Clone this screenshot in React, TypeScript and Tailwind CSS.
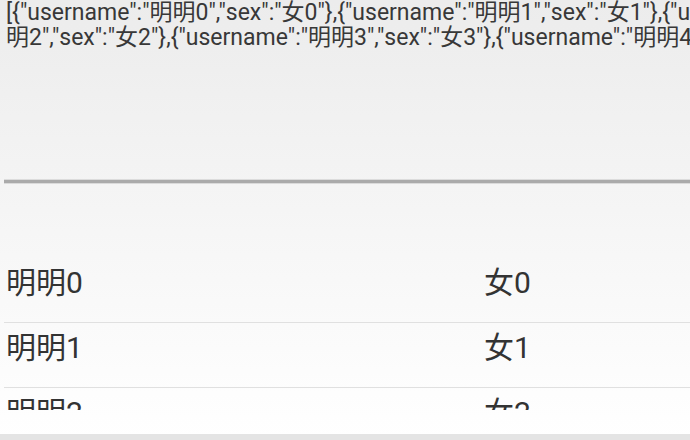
const rows = [
  { name: "明明0", sex: "女0" },
  { name: "明明1", sex: "女1" },
  { name: "明明2", sex: "女2" },
];

const font = { fontFamily: 'Roboto, "Noto Sans CJK SC", sans-serif' };

export default function App() {
  return (
    <div
      className="w-[690px] h-[440px] overflow-hidden flex flex-col bg-gradient-to-b from-[#ececec] to-[#ffffff]"
      style={font}
    >
      {/* raw json text */}
      <div className="pl-[6px] pt-0 text-[23px] leading-[25px] text-[#383838] whitespace-nowrap overflow-hidden">
        <div>{'[{"username":"明明0","sex":"女0"},{"username":"明明1","sex":"女1"},{"username":"明'}</div>
        <div>{'明2","sex":"女2"},{"username":"明明3","sex":"女3"},{"username":"明明4","sex":"女4"}]'}</div>
      </div>

      {/* divider */}
      <div className="mt-[129px] ml-[4px] flex flex-col">
        <div className="h-px bg-[#dcdcdc]" />
        <div className="h-[3px] bg-[#aaaaaa]" />
        <div className="h-px bg-[#dadada]" />
      </div>

      {/* list */}
      <div className="mt-[74px] h-[152px] overflow-hidden">
        {rows.map((r, i) => (
          <div key={r.name}>
            {i > 0 && <div className="ml-[4px] h-px bg-[#e0e0e0]" />}
            <div className="h-[64px] pt-[7px] flex text-[30px] leading-[36px] text-[#333333]">
              <div className="w-[484px] pl-[6px]">{r.name}</div>
              <div>{r.sex}</div>
            </div>
          </div>
        ))}
      </div>

      <div className="mt-auto h-[6px] bg-[#e4e4e4]" />
    </div>
  );
}
